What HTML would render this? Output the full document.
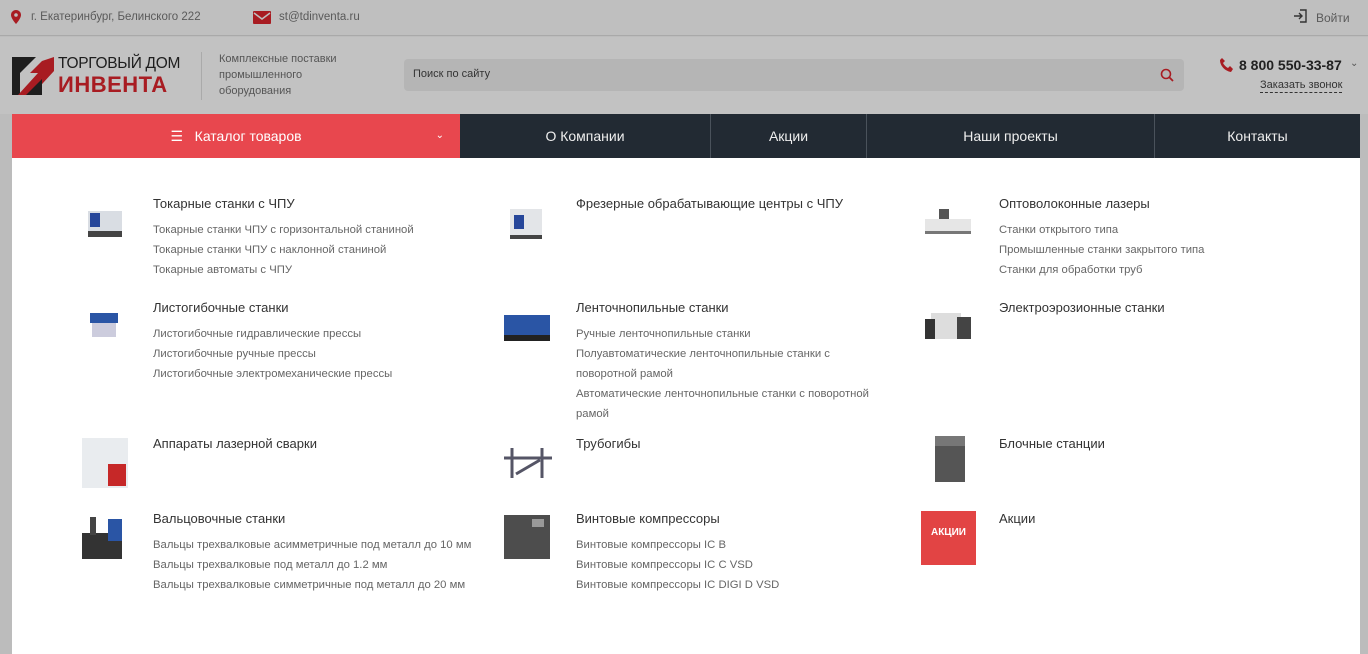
<!DOCTYPE html>
<html><head><meta charset="utf-8"><style>
*{box-sizing:border-box;margin:0;padding:0}
body{width:1368px;height:654px;overflow:hidden;background:#bcbcbc;font-family:"Liberation Sans",sans-serif;position:relative}
.top{position:absolute;left:0;top:0;width:1368px;height:36px;background:#bfbfbf;border-bottom:1px solid #a9a9a9;font-size:12px;color:#5a5a5a}
.top span{position:absolute;top:11px}
.hdr{position:absolute;left:0;top:37px;width:1368px;height:77px;background:#c2c2c2}
.nav{position:absolute;left:12px;top:114px;width:1348px;height:44px;background:#222a33;color:#eee;font-size:14px}
.nav div{position:absolute;top:0;height:44px;line-height:44px;text-align:center;border-left:1px solid #4a525b}
.drop{position:absolute;left:12px;top:158px;width:1348px;height:496px;background:#fff}
.it{position:absolute}
.it h3{font-weight:normal;font-size:13px;color:#333;margin-bottom:9px}
.it p{font-size:11.3px;color:#666;line-height:20px}
.img{position:absolute;width:54px;height:50px}
</style></head><body>
<div class="top">
<svg style="position:absolute;left:11px;top:10px" width="10" height="14" viewBox="0 0 10 14"><path d="M5 0C2.2 0 0 2.2 0 5c0 3.5 5 9 5 9s5-5.5 5-9C10 2.2 7.8 0 5 0z" fill="#a81c22"/><circle cx="5" cy="5" r="1.8" fill="#bfbfbf"/></svg>
<span style="left:31px;font-size:11.5px">г. Екатеринбург, Белинского 222</span>
<svg style="position:absolute;left:253px;top:11px" width="18" height="13"><rect width="18" height="13" rx="1" fill="#a81c22"/><path d="M1 2l8 6 8-6" stroke="#bfbfbf" stroke-width="1.5" fill="none"/></svg>
<span style="left:279px;font-size:11.5px">st@tdinventa.ru</span>
<svg style="position:absolute;left:1293px;top:9px" width="14" height="14"><path d="M7 1h6v12H7M1 7h8M6 4l3 3-3 3" stroke="#333" stroke-width="1.4" fill="none"/></svg>
<span style="left:1316px">Войти</span>
</div>
<div class="hdr">
<svg style="position:absolute;left:12px;top:20px" width="42" height="38"><path d="M0 0h24L8 16v22H0z" fill="#1e1e1e"/><path d="M42 0v14L20 38H6l20-22h-8L30 4z" fill="#a81c22"/><path d="M14 38l16-16v16z" fill="#1e1e1e"/></svg>
<div style="position:absolute;left:58px;top:18px;font-size:15.5px;color:#1e1e1e;letter-spacing:-.3px">ТОРГОВЫЙ ДОМ</div>
<div style="position:absolute;left:58px;top:35px;font-size:22px;font-weight:bold;color:#a81c22;letter-spacing:.5px">ИНВЕНТА</div>
<div style="position:absolute;left:201px;top:15px;width:1px;height:48px;background:#aaa"></div>
<div style="position:absolute;left:219px;top:14px;font-size:11px;line-height:16px;color:#555">Комплексные поставки<br>промышленного<br>оборудования</div>
<div style="position:absolute;left:404px;top:22px;width:780px;height:32px;background:#b5b5b5;border-radius:4px;font-size:11px;color:#333;padding:9px 9px"> Поиск по сайту
<svg style="position:absolute;right:10px;top:9px" width="14" height="14"><circle cx="6" cy="6" r="4.5" stroke="#a81c22" stroke-width="1.6" fill="none"/><path d="M9 9l4 4" stroke="#a81c22" stroke-width="1.8"/></svg></div>
<svg style="position:absolute;left:1219px;top:20px" width="16" height="16"><path d="M3 1l3 3-2 2c1 2 3 4 5 5l2-2 3 3-2 3C6 14 1 9 1 3z" fill="#a81c22"/></svg>
<div style="position:absolute;left:1239px;top:20px;font-size:14px;font-weight:bold;color:#222">8 800 550-33-87</div>
<div style="position:absolute;left:1350px;top:21px;font-size:10px;color:#555">⌄</div>
<div style="position:absolute;left:1260px;top:42px;font-size:11px;color:#333;border-bottom:1px dashed #333;line-height:13px">Заказать звонок</div>
</div>
<div class="nav">
<div style="left:0;width:448px;background:#e8474e;border:none;color:#fff">☰&nbsp;&nbsp; Каталог товаров<span style="position:absolute;right:16px;font-size:10px">⌄</span></div>
<div style="left:448px;width:250px;border-left:none">О Компании</div>
<div style="left:698px;width:156px">Акции</div>
<div style="left:854px;width:288px">Наши проекты</div>
<div style="left:1142px;width:206px">Контакты</div>
</div>
<div class="drop">
<div class="img" style="left:68px;top:43px"><svg width="54" height="50"><rect x="8" y="10" width="34" height="22" fill="#d9dde3"/><rect x="10" y="12" width="10" height="14" fill="#27479a"/><rect x="8" y="30" width="34" height="6" fill="#444"/></svg></div>
<div class="it" style="left:141px;top:38px"><h3>Токарные станки с ЧПУ</h3><p>Токарные станки ЧПУ с горизонтальной станиной<br>Токарные станки ЧПУ с наклонной станиной<br>Токарные автоматы с ЧПУ</p></div>
<div class="img" style="left:490px;top:43px"><svg width="54" height="50"><rect x="8" y="8" width="32" height="30" fill="#e3e5e8"/><rect x="12" y="14" width="10" height="14" fill="#27479a"/><rect x="8" y="34" width="32" height="4" fill="#444"/></svg></div>
<div class="it" style="left:564px;top:38px"><h3>Фрезерные обрабатывающие центры с ЧПУ</h3></div>
<div class="img" style="left:909px;top:43px"><svg width="54" height="50"><rect x="4" y="18" width="46" height="14" fill="#e6e6e6"/><rect x="18" y="8" width="10" height="10" fill="#555"/><rect x="4" y="30" width="46" height="3" fill="#777"/></svg></div>
<div class="it" style="left:987px;top:38px"><h3>Оптоволоконные лазеры</h3><p>Станки открытого типа<br>Промышленные станки закрытого типа<br>Станки для обработки труб</p></div>

<div class="img" style="left:68px;top:145px"><svg width="54" height="50"><rect x="10" y="10" width="28" height="10" fill="#2a55a5"/><rect x="12" y="20" width="24" height="14" fill="#ccd"/></svg></div>
<div class="it" style="left:141px;top:142px"><h3>Листогибочные станки</h3><p>Листогибочные гидравлические прессы<br>Листогибочные ручные прессы<br>Листогибочные электромеханические прессы</p></div>
<div class="img" style="left:490px;top:145px"><svg width="54" height="50"><rect x="2" y="12" width="46" height="22" fill="#2a55a5"/><rect x="2" y="32" width="46" height="6" fill="#222"/></svg></div>
<div class="it" style="left:564px;top:142px"><h3>Ленточнопильные станки</h3><p>Ручные ленточнопильные станки<br>Полуавтоматические ленточнопильные станки с<br>поворотной рамой<br>Автоматические ленточнопильные станки с поворотной<br>рамой</p></div>
<div class="img" style="left:909px;top:145px"><svg width="54" height="50"><rect x="10" y="10" width="30" height="26" fill="#ddd"/><rect x="4" y="16" width="10" height="20" fill="#333"/><rect x="36" y="14" width="14" height="22" fill="#444"/></svg></div>
<div class="it" style="left:987px;top:142px"><h3>Электроэрозионные станки</h3></div>

<div class="img" style="left:68px;top:280px"><svg width="54" height="50"><rect x="2" y="0" width="46" height="50" fill="#e9ecef"/><rect x="28" y="26" width="18" height="22" fill="#c62828"/></svg></div>
<div class="it" style="left:141px;top:278px"><h3>Аппараты лазерной сварки</h3></div>
<div class="img" style="left:490px;top:280px"><svg width="54" height="50"><path d="M2 20h48M10 10v30M40 10v30M14 36l24-14" stroke="#556" stroke-width="3"/></svg></div>
<div class="it" style="left:564px;top:278px"><h3>Трубогибы</h3></div>
<div class="img" style="left:909px;top:278px"><svg width="54" height="50"><rect x="14" y="0" width="30" height="46" fill="#555"/><rect x="14" y="0" width="30" height="10" fill="#777"/></svg></div>
<div class="it" style="left:987px;top:278px"><h3>Блочные станции</h3></div>

<div class="img" style="left:68px;top:355px"><svg width="54" height="50"><rect x="2" y="20" width="40" height="26" fill="#333"/><rect x="28" y="6" width="14" height="22" fill="#2a55a5"/><rect x="10" y="4" width="6" height="18" fill="#444"/></svg></div>
<div class="it" style="left:141px;top:353px"><h3>Вальцовочные станки</h3><p>Вальцы трехвалковые асимметричные под металл до 10 мм<br>Вальцы трехвалковые под металл до 1.2 мм<br>Вальцы трехвалковые симметричные под металл до 20 мм</p></div>
<div class="img" style="left:490px;top:355px"><svg width="54" height="50"><rect x="2" y="2" width="46" height="44" fill="#4d4d4d"/><rect x="30" y="6" width="12" height="8" fill="#999"/></svg></div>
<div class="it" style="left:564px;top:353px"><h3>Винтовые компрессоры</h3><p>Винтовые компрессоры IC B<br>Винтовые компрессоры IC C VSD<br>Винтовые компрессоры IC DIGI D VSD</p></div>
<div class="img" style="left:909px;top:353px;width:55px;height:54px;background:#e24444;color:#fff;font-size:10px;font-weight:bold;text-align:center;line-height:44px">АКЦИИ</div>
<div class="it" style="left:987px;top:353px"><h3>Акции</h3></div>
</div>
</body></html>
